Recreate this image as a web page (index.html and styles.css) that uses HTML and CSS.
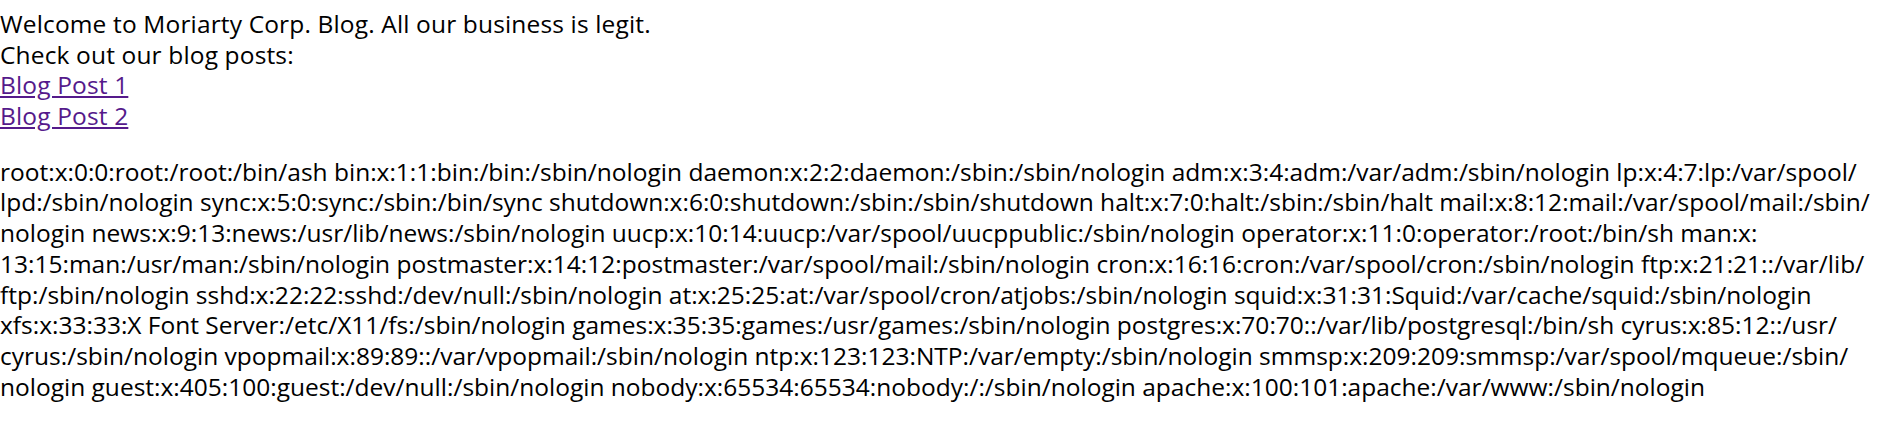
FILE: index.html
```html
<!DOCTYPE html>
<html>
<head>
<meta charset="utf-8">
<title>Moriarty Corp. Blog</title>
<link rel="stylesheet" href="styles.css">
</head>
<body>
<div class="intro">Welcome to Moriarty Corp. Blog. All our business is legit.<br>
Check out our blog posts:<br>
<a class="post-link" href="#">Blog Post 1</a><br>
<a class="post-link" href="#">Blog Post 2</a></div>
<p class="dump">root:x:0:0:root:/root:/bin/ash bin:x:1:1:bin:/bin:/sbin/nologin daemon:x:2:2:daemon:/sbin:/sbin/nologin adm:x:3:4:adm:/var/adm:/sbin/nologin lp:x:4:7:lp:/var/spool/<br>lpd:/sbin/nologin sync:x:5:0:sync:/sbin:/bin/sync shutdown:x:6:0:shutdown:/sbin:/sbin/shutdown halt:x:7:0:halt:/sbin:/sbin/halt mail:x:8:12:mail:/var/spool/mail:/sbin/<br>nologin news:x:9:13:news:/usr/lib/news:/sbin/nologin uucp:x:10:14:uucp:/var/spool/uucppublic:/sbin/nologin operator:x:11:0:operator:/root:/bin/sh man:x:<br>13:15:man:/usr/man:/sbin/nologin postmaster:x:14:12:postmaster:/var/spool/mail:/sbin/nologin cron:x:16:16:cron:/var/spool/cron:/sbin/nologin ftp:x:21:21::/var/lib/<br>ftp:/sbin/nologin sshd:x:22:22:sshd:/dev/null:/sbin/nologin at:x:25:25:at:/var/spool/cron/atjobs:/sbin/nologin squid:x:31:31:Squid:/var/cache/squid:/sbin/nologin<br>xfs:x:33:33:X Font Server:/etc/X11/fs:/sbin/nologin games:x:35:35:games:/usr/games:/sbin/nologin postgres:x:70:70::/var/lib/postgresql:/bin/sh cyrus:x:85:12::/usr/<br>cyrus:/sbin/nologin vpopmail:x:89:89::/var/vpopmail:/sbin/nologin ntp:x:123:123:NTP:/var/empty:/sbin/nologin smmsp:x:209:209:smmsp:/var/spool/mqueue:/sbin/<br>nologin guest:x:405:100:guest:/dev/null:/sbin/nologin nobody:x:65534:65534:nobody:/:/sbin/nologin apache:x:100:101:apache:/var/www:/sbin/nologin</p>
</body>
</html>
```
FILE: styles.css
```css
html { background: #ffffff; }
body {
  margin: 9px 0 0 0;
  font-family: "Open Sans", "Noto Sans", sans-serif;
  font-size: 24.5px;
  line-height: 30.7px;
  color: #000000;
}
.intro { letter-spacing: 0.15px; }
.post-link { color: #551a8b; text-decoration: underline; }
.dump { margin: 24.9px 0 0 0; }
```
